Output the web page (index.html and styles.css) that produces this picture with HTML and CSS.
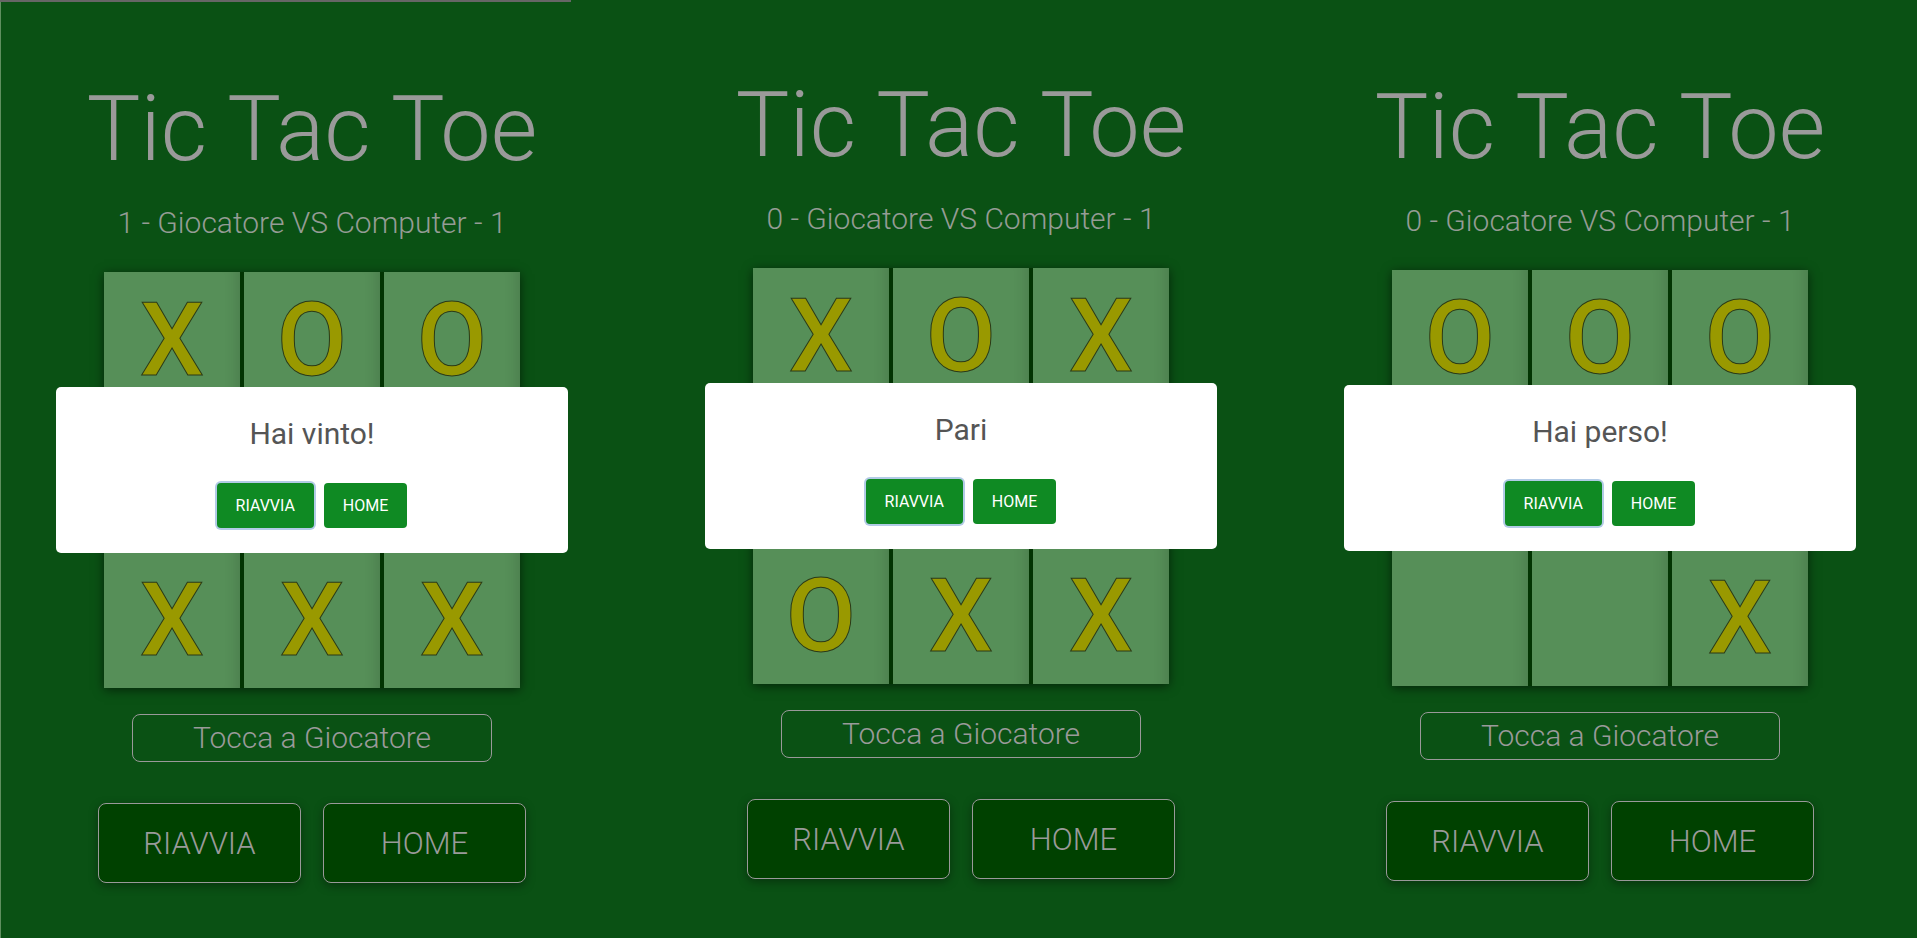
FILE: index.html
```html
<!DOCTYPE html>
<html lang="it">
<head>
<meta charset="utf-8">
<title>Tic Tac Toe</title>
<link rel="stylesheet" href="styles.css">
</head>
<body>
<div class="page">
  <div class="topbar"></div>
  <div class="row">
    <section class="panel p1">
      <h1 class="title">Tic Tac Toe</h1>
      <p class="score">1 - Giocatore VS Computer - 1</p>
      <div class="board-wrap">
        <div class="board">
          <div class="cell">X</div><div class="cell">O</div><div class="cell">O</div>
          <div class="cell"></div><div class="cell"></div><div class="cell"></div>
          <div class="cell">X</div><div class="cell">X</div><div class="cell">X</div>
        </div>
        <div class="modal">
          <div class="modal-text">Hai vinto!</div>
          <div class="modal-actions">
            <button class="mbtn focus">RIAVVIA</button>
            <button class="mbtn">HOME</button>
          </div>
        </div>
      </div>
      <div class="turn">Tocca a Giocatore</div>
      <div class="actions">
        <button class="btn">RIAVVIA</button>
        <button class="btn">HOME</button>
      </div>
    </section>
    <section class="panel p2">
      <h1 class="title">Tic Tac Toe</h1>
      <p class="score">0 - Giocatore VS Computer - 1</p>
      <div class="board-wrap">
        <div class="board">
          <div class="cell">X</div><div class="cell">O</div><div class="cell">X</div>
          <div class="cell"></div><div class="cell"></div><div class="cell"></div>
          <div class="cell">O</div><div class="cell">X</div><div class="cell">X</div>
        </div>
        <div class="modal">
          <div class="modal-text">Pari</div>
          <div class="modal-actions">
            <button class="mbtn focus">RIAVVIA</button>
            <button class="mbtn">HOME</button>
          </div>
        </div>
      </div>
      <div class="turn">Tocca a Giocatore</div>
      <div class="actions">
        <button class="btn">RIAVVIA</button>
        <button class="btn">HOME</button>
      </div>
    </section>
    <section class="panel p3">
      <h1 class="title">Tic Tac Toe</h1>
      <p class="score">0 - Giocatore VS Computer - 1</p>
      <div class="board-wrap">
        <div class="board">
          <div class="cell">O</div><div class="cell">O</div><div class="cell">O</div>
          <div class="cell"></div><div class="cell"></div><div class="cell"></div>
          <div class="cell"></div><div class="cell"></div><div class="cell">X</div>
        </div>
        <div class="modal">
          <div class="modal-text">Hai perso!</div>
          <div class="modal-actions">
            <button class="mbtn focus">RIAVVIA</button>
            <button class="mbtn">HOME</button>
          </div>
        </div>
      </div>
      <div class="turn">Tocca a Giocatore</div>
      <div class="actions">
        <button class="btn">RIAVVIA</button>
        <button class="btn">HOME</button>
      </div>
    </section>
  </div>
</div>
</body>
</html>
```
FILE: styles.css
```css
html, body {
  margin: 0;
  padding: 0;
  height: 100%;
  overflow: hidden;
}
body {
  background: #0a5114;
  font-family: Roboto, "Liberation Sans", sans-serif;
  color: #999;
}
.page {
  display: flex;
  flex-direction: column;
  height: 100%;
}
.topbar {
  width: 571px;
  height: 2px;
  background: #666;
  flex: none;
}
.row {
  display: flex;
  flex: 1;
  border-left: 1px solid #5f8f5f;
}
.panel {
  display: flex;
  flex-direction: column;
  align-items: center;
  flex: none;
}
.p1 { width: 622px; padding-top: 83px; }
.p2 { width: 676px; padding-top: 79px; }
.p3 { width: 602px; padding-top: 81px; }

.title {
  margin: 0;
  font-size: 90px;
  line-height: 90px;
  font-weight: 300;
  color: #9a9a9a;
  white-space: nowrap;
}
.score {
  margin: 33px 0 0;
  font-size: 30px;
  line-height: 30px;
  font-weight: 300;
  color: #959c95;
  white-space: nowrap;
}
.board-wrap {
  position: relative;
  margin-top: 34px;
}
.board {
  display: grid;
  grid-template-columns: repeat(3, 136px);
  grid-template-rows: repeat(3, 136px);
  gap: 4px;
  background: #023402;
  box-shadow: 0 2px 10px rgba(0, 0, 0, 0.55);
}
.cell {
  background: #568f58;
  display: flex;
  align-items: center;
  justify-content: center;
  font-size: 102px;
  line-height: 1;
  font-weight: 500;
  color: #999900;
  -webkit-text-stroke: 1px #2a3a18;
  box-shadow: inset -16px 0 16px -16px rgba(0, 0, 0, 0.18);
}
.modal {
  position: absolute;
  left: 50%;
  top: 115px;
  width: 512px;
  height: 166px;
  margin-left: -256px;
  background: #fff;
  border-radius: 5px;
  display: flex;
  flex-direction: column;
  align-items: center;
}
.modal-text {
  margin-top: 32px;
  font-size: 30px;
  line-height: 30px;
  font-weight: 400;
  color: #555;
}
.modal-actions {
  display: flex;
  gap: 10px;
  margin-top: 34px;
}
.mbtn {
  height: 45px;
  padding: 0 19px;
  border: none;
  border-radius: 4px;
  background: #0f8a23;
  color: #fff;
  font-family: Roboto, "Liberation Sans", sans-serif;
  font-size: 16px;
  font-weight: 400;
}
.mbtn.focus {
  box-shadow: 0 0 0 2px #b2cbe6;
  padding: 0 17px;
  min-width: 97px;
}
.turn {
  margin-top: 26px;
  width: 358px;
  height: 46px;
  border: 1px solid #999;
  border-radius: 8px;
  text-align: center;
  font-size: 30px;
  line-height: 46px;
  font-weight: 300;
  color: #9a9a9a;
}
.actions {
  display: flex;
  gap: 22px;
  margin-top: 41px;
}
.btn {
  width: 203px;
  height: 80px;
  border: 1px solid #999;
  border-radius: 8px;
  background: #004100;
  box-shadow: 0 3px 10px rgba(0, 0, 0, 0.35);
  color: #9a9a9a;
  font-family: Roboto, "Liberation Sans", sans-serif;
  font-size: 31px;
  font-weight: 300;
}
```
